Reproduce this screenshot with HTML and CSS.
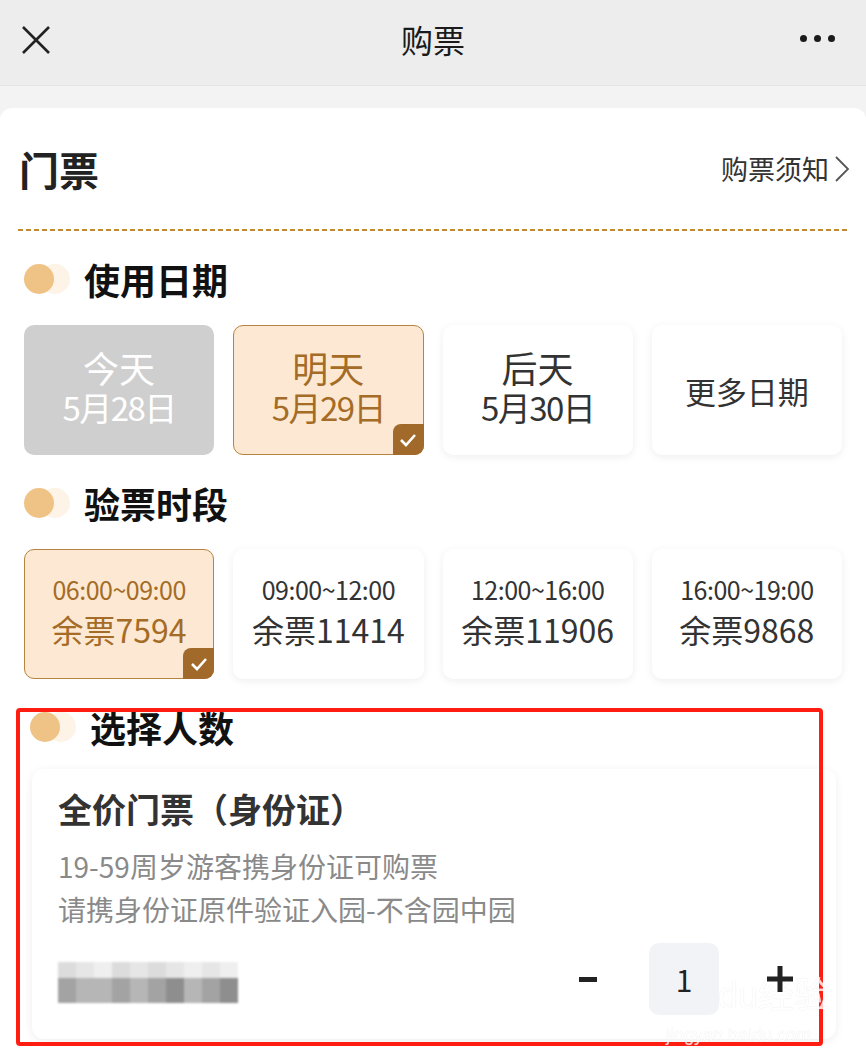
FILE: index.html
```html
<!DOCTYPE html>
<html lang="zh-CN">
<head>
    <meta charset="UTF-8">
    <title>购票</title>
    <link rel="stylesheet" href="styles.css">
</head>
<body>
    <div class="topbar">
        <div class="topbar-left">
            <svg class="close-icon" width="30" height="30" viewBox="0 0 30 30">
                <path d="M2 2 L28 28 M28 2 L2 28" stroke="#222" stroke-width="2.6" fill="none"/>
            </svg>
        </div>
        <div class="topbar-title">购票</div>
        <div class="topbar-right">
            <span class="dot"></span><span class="dot"></span><span class="dot"></span>
        </div>
    </div>

    <div class="sheet">
        <div class="sheet-head">
            <h1>门票</h1>
            <div class="notice">购票须知
                <svg width="16" height="28" viewBox="0 0 16 28">
                    <path d="M2 2 L14 14 L2 26" stroke="#555" stroke-width="1.8" fill="none"/>
                </svg>
            </div>
        </div>
        <div class="dashed"></div>

        <div class="section-title"><span class="bullet"></span>使用日期</div>
        <div class="options">
            <div class="option disabled">
                <div class="line-big">今天</div>
                <div class="line-date">5月28日</div>
            </div>
            <div class="option selected">
                <div class="line-big">明天</div>
                <div class="line-date">5月29日</div>
                <span class="check">
                    <svg width="18" height="14" viewBox="0 0 18 14"><path d="M2 7 L7 12 L16 2" stroke="#fff" stroke-width="2.6" fill="none"/></svg>
                </span>
            </div>
            <div class="option">
                <div class="line-big">后天</div>
                <div class="line-date">5月30日</div>
            </div>
            <div class="option">
                <div class="line-more">更多日期</div>
            </div>
        </div>

        <div class="section-title"><span class="bullet"></span>验票时段</div>
        <div class="options">
            <div class="option selected">
                <div class="line-time">06:00~09:00</div>
                <div class="line-left">余票7594</div>
                <span class="check">
                    <svg width="18" height="14" viewBox="0 0 18 14"><path d="M2 7 L7 12 L16 2" stroke="#fff" stroke-width="2.6" fill="none"/></svg>
                </span>
            </div>
            <div class="option">
                <div class="line-time">09:00~12:00</div>
                <div class="line-left">余票11414</div>
            </div>
            <div class="option">
                <div class="line-time">12:00~16:00</div>
                <div class="line-left">余票11906</div>
            </div>
            <div class="option">
                <div class="line-time">16:00~19:00</div>
                <div class="line-left">余票9868</div>
            </div>
        </div>

        <div class="section-title shifted"><span class="bullet"></span>选择人数</div>
        <div class="ticket">
            <div class="ticket-name">全价门票（身份证）</div>
            <div class="ticket-desc first">19-59周岁游客携身份证可购票</div>
            <div class="ticket-desc">请携身份证原件验证入园-不含园中园</div>
            <div class="ticket-row">
                <div class="mosaic">
                    <span class="m2"></span><span class="m3"></span><span class="m4"></span><span class="m2"></span><span class="m3"></span><span class="m2"></span><span class="m3"></span><span class="m4"></span><span class="m3"></span><span class="m4"></span>
                    <span class="m6"></span><span class="m7"></span><span class="m7"></span><span class="m6"></span><span class="m7"></span><span class="m6"></span><span class="m5"></span><span class="m7"></span><span class="m6"></span><span class="m5"></span>
                </div>
                <div class="counter">
                    <span class="minus"></span>
                    <span class="count">1</span>
                    <svg class="plus" width="28" height="28" viewBox="0 0 28 28"><path d="M14 1 V27 M1 14 H27" stroke="#222" stroke-width="5"/></svg>
                </div>
            </div>
        </div>

        <div class="highlight"></div>
        <div class="watermark">
            <div class="wm-logo">Baidu经验</div>
            <div class="wm-url">jingyan.baidu.com</div>
        </div>
    </div>
</body>
</html>
```

FILE: styles.css
```css
body {
    margin: 0;
    background-color: #f3f3f3;
    font-family: "Noto Sans CJK SC", "Noto Sans", sans-serif;
    color: #222;
    overflow: hidden;
}

.topbar {
    height: 86px;
    background-color: #ededed;
    border-bottom: 1px solid #e4e4e4;
    display: grid;
    grid-template-columns: 1fr auto 1fr;
    align-items: center;
    box-sizing: border-box;
}

.topbar-left {
    padding-left: 21px;
    display: flex;
    padding-bottom: 6px;
}

.topbar-title {
    font-size: 32px;
    color: #1b1b1b;
    padding-bottom: 8px;
}

.topbar-right {
    display: flex;
    justify-content: flex-end;
    gap: 7px;
    padding-right: 31px;
    padding-bottom: 8px;
}

.dot {
    width: 7px;
    height: 7px;
    border-radius: 50%;
    background-color: #1b1b1b;
}

.sheet {
    position: relative;
    margin-top: 22px;
    background-color: #fff;
    border-radius: 12px 12px 0 0;
    padding: 0 18px;
    height: 960px;
}

.sheet-head {
    height: 121px;
    display: flex;
    align-items: center;
    justify-content: space-between;
}

.dashed {
    height: 2px;
    background: repeating-linear-gradient(90deg, #c08a35 0 5px, transparent 5px 8px);
}

.sheet-head h1 {
    margin: 0 0 0 1px;
    font-size: 40px;
    font-weight: bold;
    color: #222;
}

.notice {
    display: flex;
    align-items: center;
    gap: 5px;
    font-size: 27px;
    color: #333;
    margin-right: -2px;
}

.section-title {
    display: flex;
    align-items: center;
    height: 50px;
    margin-top: 23px;
    padding-left: 6px;
    font-size: 36px;
    font-weight: bold;
    color: #111;
}

.section-title.shifted {
    padding-left: 12px;
}

.bullet {
    width: 30px;
    height: 30px;
    border-radius: 50%;
    background-color: #efc285;
    box-shadow: 16px 0 0 #fdf3e7;
    margin-right: 30px;
}

.options {
    display: grid;
    grid-template-columns: repeat(4, 1fr);
    gap: 19px;
    margin: 21px 6px 0;
}

.option {
    position: relative;
    height: 130px;
    border-radius: 10px;
    background-color: #fff;
    box-shadow: 0 2px 8px rgba(0, 0, 0, 0.07);
    display: flex;
    flex-direction: column;
    align-items: center;
    justify-content: center;
    color: #333;
    box-sizing: border-box;
}

.option.disabled {
    background-color: #cfcfcf;
    color: #fff;
    box-shadow: none;
}

.option.selected {
    background-color: #fde9d3;
    border: 1.5px solid #b5843f;
    color: #a46c27;
    box-shadow: none;
}

.check {
    position: absolute;
    right: -1px;
    bottom: -1px;
    width: 31px;
    height: 31px;
    border-radius: 8px 0 9px 0;
    background-color: #a16a2a;
    display: flex;
    align-items: center;
    justify-content: center;
}

.line-big {
    font-size: 36px;
    line-height: 42px;
}

.line-date {
    font-size: 33px;
    line-height: 38px;
    letter-spacing: -1.5px;
    margin-bottom: 8px;
}

.line-more {
    font-size: 31px;
}

.line-time {
    font-size: 25px;
    line-height: 34px;
    letter-spacing: -0.5px;
}

.line-left {
    font-size: 32px;
    line-height: 46px;
    margin-bottom: 4px;
}

.ticket {
    margin: 17px 12px 0 14px;
    padding: 18px 26px 24px;
    background-color: #fff;
    border-radius: 12px;
    box-shadow: 0 2px 10px rgba(0, 0, 0, 0.07);
}

.ticket-name {
    font-size: 34px;
    font-weight: bold;
    line-height: 44px;
    color: #333;
}

.ticket-desc {
    font-size: 28px;
    line-height: 43px;
    color: #8a8a8a;
}

.ticket-desc.first {
    margin-top: 14px;
}

.ticket-row {
    display: flex;
    align-items: center;
    justify-content: space-between;
    margin-top: 12px;
    height: 72px;
}

.mosaic {
    display: grid;
    grid-template-columns: repeat(10, 18px);
    grid-template-rows: 16px 25px;
    filter: blur(1px);
    margin-top: 6px;
}

.m2 { background-color: #dcdcdc; }
.m3 { background-color: #e6e6e6; }
.m4 { background-color: #efefef; }
.m5 { background-color: #8e8e8e; }
.m6 { background-color: #a3a3a3; }
.m7 { background-color: #b6b6b6; }

.counter {
    position: relative;
    z-index: 1;
    display: flex;
    align-items: center;
    margin-right: 16px;
}

.minus {
    width: 18px;
    height: 5px;
    background-color: #222;
    margin-right: 52px;
}

.count {
    width: 70px;
    height: 72px;
    border-radius: 10px;
    background-color: #f2f3f7;
    display: flex;
    align-items: center;
    justify-content: center;
    font-size: 30px;
    color: #222;
    margin-right: 47px;
}

.highlight {
    position: absolute;
    left: 16px;
    top: 600px;
    width: 807px;
    height: 338px;
    border: 4px solid #ff1c10;
    border-radius: 4px;
    box-sizing: border-box;
}

.watermark {
    position: absolute;
    left: 666px;
    top: 868px;
    color: #fff;
    text-shadow: 0 0 1px #d8d8d8;
    font-family: "Liberation Sans", "Noto Sans CJK SC", sans-serif;
    opacity: 0.8;
}

.wm-logo {
    font-size: 36px;
    line-height: 40px;
}

.wm-url {
    font-size: 18px;
    line-height: 22px;
    margin-top: 8px;
}
```
